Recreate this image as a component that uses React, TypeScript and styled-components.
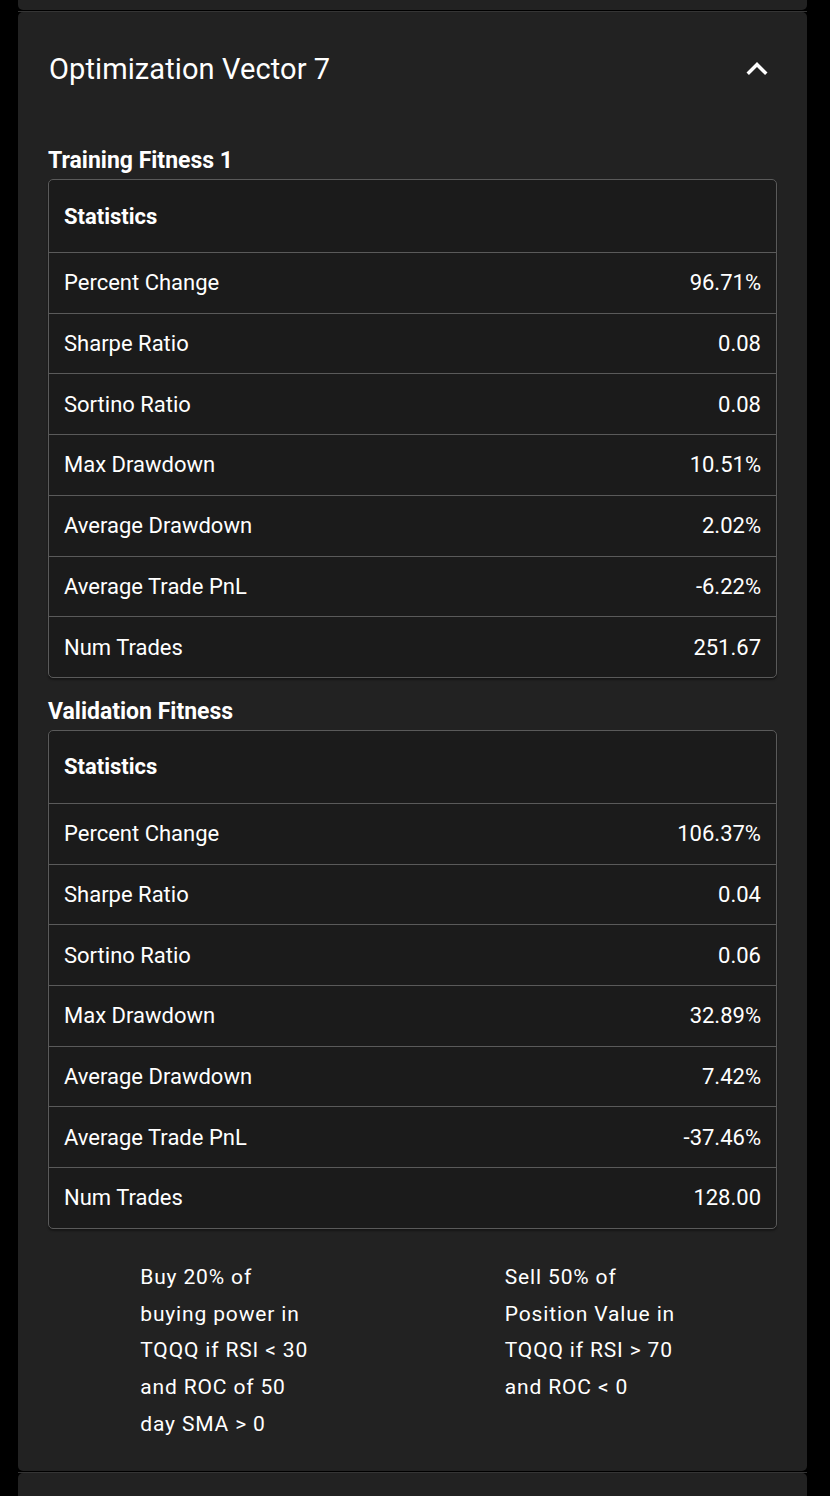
import React from "react";
import styled, { createGlobalStyle } from "styled-components";

const Global = createGlobalStyle`
  html, body { margin: 0; padding: 0; background: #000; }
  body { font-family: Roboto, "Liberation Sans", sans-serif; color: #fff; }
`;

const Page = styled.div`
  padding-left: 18px;
  width: 789px;
  display: flex;
  flex-direction: column;
  gap: 2px;
`;

const Card = styled.section<{ $stub?: boolean }>`
  position: relative;
  background: #222222;
  border-radius: ${(p) => (p.$stub ? "0 0 5px 5px" : "5px")};
  height: ${(p) => (p.$stub ? "10px" : "auto")};
  &::before {
    content: ${(p) => (p.$stub ? "none" : "''")};
    position: absolute;
    left: 0;
    right: 0;
    top: -1px;
    height: 1px;
    background: #353535;
  }
`;

const Header = styled.div`
  display: flex;
  align-items: center;
  justify-content: space-between;
  padding: 34px 30px 34px 31px;
`;

const Title = styled.h2`
  margin: 0;
  font-size: 29px;
  font-weight: 400;
  line-height: 46px;
  letter-spacing: 0.1px;
`;

const Chevron = styled.svg`
  width: 42px;
  height: 42px;
  fill: #fff;
  margin-right: -1px;
`;

const Body = styled.div`
  padding: 17px 30px 28px 30px;
  display: flex;
  flex-direction: column;
`;

const SectionLabel = styled.h3`
  margin: 0;
  font-size: 23px;
  font-weight: 700;
  line-height: 36px;
  letter-spacing: 0px;
`;

const TableBox = styled.div`
  border: 1px solid #5a5a5a;
  border-radius: 5px;
  background: #1b1b1b;
  box-shadow: 0 2px 2px rgba(0, 0, 0, 0.35);
  overflow: hidden;
  margin-bottom: 16px;
`;

const Row = styled.div<{ $head?: boolean }>`
  display: flex;
  justify-content: space-between;
  align-items: center;
  height: ${(p) => (p.$head ? "72px" : "59.71px")};
  padding: 0 15px;
  font-size: 22px;
  font-weight: ${(p) => (p.$head ? 700 : 400)};
  letter-spacing: 0px;
  border-bottom: 1px solid #5a5a5a;
  &:last-child { border-bottom: none; }
`;

const Rules = styled.div`
  display: grid;
  grid-template-columns: 1fr 1fr;
  margin-top: 14px;
`;

const RuleCell = styled.div`
  display: flex;
  justify-content: center;
`;

const RuleText = styled.p`
  margin: 0;
  width: 180px;
  font-size: 21px;
  line-height: 36.8px;
  letter-spacing: 0.85px;
`;

type Stat = [string, string];

const training: Stat[] = [
  ["Percent Change", "96.71%"],
  ["Sharpe Ratio", "0.08"],
  ["Sortino Ratio", "0.08"],
  ["Max Drawdown", "10.51%"],
  ["Average Drawdown", "2.02%"],
  ["Average Trade PnL", "-6.22%"],
  ["Num Trades", "251.67"],
];

const validation: Stat[] = [
  ["Percent Change", "106.37%"],
  ["Sharpe Ratio", "0.04"],
  ["Sortino Ratio", "0.06"],
  ["Max Drawdown", "32.89%"],
  ["Average Drawdown", "7.42%"],
  ["Average Trade PnL", "-37.46%"],
  ["Num Trades", "128.00"],
];

function StatTable({ rows }: { rows: Stat[] }) {
  return (
    <TableBox>
      <Row $head>
        <span>Statistics</span>
      </Row>
      {rows.map(([k, v]) => (
        <Row key={k}>
          <span>{k}</span>
          <span>{v}</span>
        </Row>
      ))}
    </TableBox>
  );
}

export default function App() {
  return (
    <>
      <Global />
      <Page>
        <Card $stub />
        <Card>
          <Header>
            <Title>Optimization Vector 7</Title>
            <Chevron viewBox="0 0 24 24">
              <path d="M12 8l-6 6 1.41 1.41L12 10.83l4.59 4.58L18 14z" />
            </Chevron>
          </Header>
          <Body>
            <SectionLabel>Training Fitness 1</SectionLabel>
            <StatTable rows={training} />
            <SectionLabel>Validation Fitness</SectionLabel>
            <StatTable rows={validation} />
            <Rules>
              <RuleCell>
                <RuleText>
                  Buy 20% of buying power in TQQQ if RSI &lt; 30 and ROC of 50 day SMA &gt; 0
                </RuleText>
              </RuleCell>
              <RuleCell>
                <RuleText>
                  Sell 50% of Position Value in TQQQ if RSI &gt; 70 and ROC &lt; 0
                </RuleText>
              </RuleCell>
            </Rules>
          </Body>
        </Card>
        <Card>
          <Header />
        </Card>
      </Page>
    </>
  );
}
